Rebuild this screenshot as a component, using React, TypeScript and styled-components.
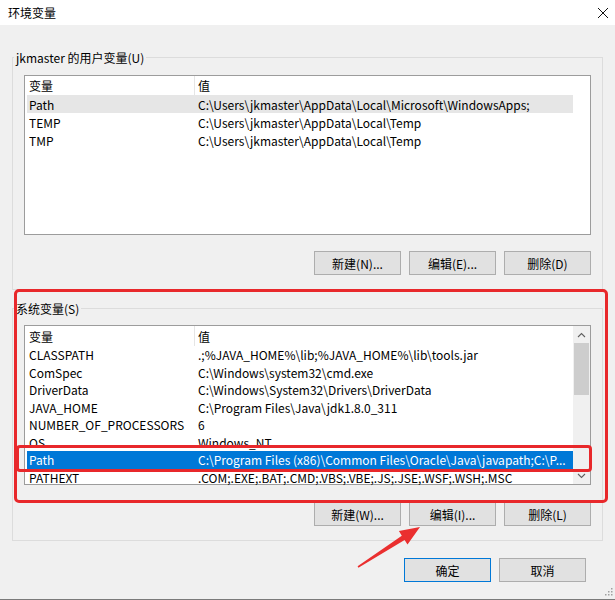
import React from "react";
import styled, { createGlobalStyle } from "styled-components";

interface EnvVar {
  name: string;
  value: string;
}

const userVars: EnvVar[] = [
  { name: "Path", value: "C:\\Users\\jkmaster\\AppData\\Local\\Microsoft\\WindowsApps;" },
  { name: "TEMP", value: "C:\\Users\\jkmaster\\AppData\\Local\\Temp" },
  { name: "TMP", value: "C:\\Users\\jkmaster\\AppData\\Local\\Temp" },
];

const systemVars: EnvVar[] = [
  { name: "CLASSPATH", value: ".;%JAVA_HOME%\\lib;%JAVA_HOME%\\lib\\tools.jar" },
  { name: "ComSpec", value: "C:\\Windows\\system32\\cmd.exe" },
  { name: "DriverData", value: "C:\\Windows\\System32\\Drivers\\DriverData" },
  { name: "JAVA_HOME", value: "C:\\Program Files\\Java\\jdk1.8.0_311" },
  { name: "NUMBER_OF_PROCESSORS", value: "6" },
  { name: "OS", value: "Windows_NT" },
  { name: "Path", value: "C:\\Program Files (x86)\\Common Files\\Oracle\\Java\\javapath;C:\\P..." },
  { name: "PATHEXT", value: ".COM;.EXE;.BAT;.CMD;.VBS;.VBE;.JS;.JSE;.WSF;.WSH;.MSC" },
];

const GlobalStyle = createGlobalStyle`
  body {
    margin: 0;
    background: #f0f0f0;
    font-family: "Noto Sans CJK SC", "Liberation Sans", sans-serif;
    font-size: 12px;
    color: #000;
  }
`;

const Window = styled.div`
  position: relative;
  width: 615px;
  height: 600px;
  background: #f0f0f0;
  box-sizing: border-box;
  border-bottom: 1px solid #7a7a7a;
  overflow: hidden;
`;

const TitleBar = styled.div`
  height: 25px;
  background: #fff;
  display: flex;
  align-items: center;
  justify-content: space-between;
  padding: 0 6px 0 8px;
  font-size: 12px;
`;

const Group = styled.fieldset<{ $top: number }>`
  position: relative;
  margin: ${(p) => p.$top}px 12px 0;
  padding: 0 0 14px;
  border: 1px solid #dcdcdc;
  min-width: 0;
`;

const Legend = styled.legend`
  margin-left: 1px;
  padding: 0 2px;
  line-height: 17px;
  font-size: 12px;
`;

const GroupInner = styled.div<{ $gap: number }>`
  padding: ${(p) => p.$gap}px 11px 0;
`;

const ListBox = styled.div<{ $height: number }>`
  position: relative;
  display: flex;
  height: ${(p) => p.$height}px;
  border: 1px solid #9c9c9c;
  background: #fff;
  box-sizing: border-box;
`;

const ListContent = styled.div`
  width: 548px;
`;

const HeaderRow = styled.div<{ $h: number }>`
  display: grid;
  grid-template-columns: 170px 1fr;
  height: ${(p) => p.$h}px;
  align-items: center;
`;

const HeaderCell = styled.div<{ $first?: boolean }>`
  height: 100%;
  display: flex;
  align-items: center;
  padding-left: ${(p) => (p.$first ? 4 : 3)}px;
  border-right: ${(p) => (p.$first ? "1px solid #e5e5e5" : "none")};
`;

const Row = styled.div<{ $h: number; $state?: "focus" | "blur" }>`
  position: relative;
  display: grid;
  grid-template-columns: 168px 1fr;
  margin-left: 2px;
  height: ${(p) => p.$h}px;
  align-items: center;
  white-space: nowrap;
  background: ${(p) =>
    p.$state === "focus" ? "#0078d7" : p.$state === "blur" ? "#e6e6e6" : "transparent"};
  color: ${(p) => (p.$state === "focus" ? "#fff" : "#000")};
`;

const Cell = styled.div<{ $pad: number }>`
  padding-left: ${(p) => p.$pad}px;
  overflow: hidden;
`;

const Scrollbar = styled.div`
  margin-left: auto;
  width: 17px;
  background: #f0f0f0;
  display: flex;
  flex-direction: column;
`;

const ScrollArrow = styled.div`
  height: 17px;
  display: flex;
  align-items: center;
  justify-content: center;
`;

const ScrollThumb = styled.div`
  height: 52px;
  margin: 0 1px;
  background: #cdcdcd;
`;

const ScrollTrack = styled.div`
  flex: 1;
`;

const ButtonRow = styled.div<{ $top: number; $right?: number }>`
  display: flex;
  justify-content: flex-end;
  gap: 8px;
  margin-top: ${(p) => p.$top}px;
  padding-right: ${(p) => p.$right ?? 0}px;
`;

const Button = styled.button<{ $default?: boolean }>`
  width: 87px;
  height: 24px;
  padding: 0;
  background: #e1e1e1;
  border: 1px solid ${(p) => (p.$default ? "#0078d7" : "#adadad")};
  font-family: inherit;
  font-size: 12px;
  color: #000;
`;

const Annotation = styled.div`
  position: absolute;
  border: 3px solid #e8282b;
  border-radius: 5px;
  pointer-events: none;
`;

const OuterMark = styled(Annotation)`
  left: 1px;
  right: -6px;
  top: -28px;
  bottom: 37px;
`;

const RowMark = styled(Annotation)`
  left: -11px;
  right: -19px;
  top: -6px;
  bottom: -3px;
  border-radius: 4px;
`;

const Overlay = styled.svg`
  position: absolute;
  left: 0;
  top: 0;
  pointer-events: none;
`;

const Grip = styled.svg`
  position: absolute;
  right: 2px;
  bottom: 3px;
`;

const Chevron = ({ up }: { up?: boolean }) => (
  <svg width="9" height="6" viewBox="0 0 9 6">
    <path
      d={up ? "M1 5 L4.5 1.5 L8 5" : "M1 1 L4.5 4.5 L8 1"}
      fill="none"
      stroke="#606060"
      strokeWidth="1.1"
    />
  </svg>
);

interface VarListProps {
  vars: EnvVar[];
  headerHeight: number;
  rowHeight: number;
  selected: number;
  focused?: boolean;
  scroll?: boolean;
}

const VarList = ({ vars, headerHeight, rowHeight, selected, focused, scroll }: VarListProps) => (
  <ListBox $height={160}>
    <ListContent>
      <HeaderRow $h={headerHeight}>
        <HeaderCell $first>变量</HeaderCell>
        <HeaderCell>值</HeaderCell>
      </HeaderRow>
      {vars.map((v, i) => (
        <Row
          key={v.name}
          $h={rowHeight}
          $state={i === selected ? (focused ? "focus" : "blur") : undefined}
        >
          <Cell $pad={2}>{v.name}</Cell>
          <Cell $pad={3}>{v.value}</Cell>
          {i === selected && focused && <RowMark />}
        </Row>
      ))}
    </ListContent>
    {scroll && (
      <Scrollbar>
        <ScrollArrow>
          <Chevron up />
        </ScrollArrow>
        <ScrollThumb />
        <ScrollTrack />
        <ScrollArrow>
          <Chevron />
        </ScrollArrow>
      </Scrollbar>
    )}
  </ListBox>
);

export default function App() {
  return (
    <>
      <GlobalStyle />
      <Window>
        <TitleBar>
          <span>环境变量</span>
          <svg width="12" height="12" viewBox="0 0 12 12">
            <path d="M1 1 L11 11 M11 1 L1 11" stroke="#111" strokeWidth="1" />
          </svg>
        </TitleBar>

        <Group $top={24}>
          <Legend>jkmaster 的用户变量(U)</Legend>
          <GroupInner $gap={9}>
            <VarList vars={userVars} headerHeight={19} rowHeight={18} selected={0} />
            <ButtonRow $top={16}>
              <Button>新建(N)...</Button>
              <Button>编辑(E)...</Button>
              <Button>删除(D)</Button>
            </ButtonRow>
          </GroupInner>
        </Group>

        <Group $top={10}>
          <Legend>系统变量(S)</Legend>
          <GroupInner $gap={8}>
            <VarList
              vars={systemVars}
              headerHeight={20}
              rowHeight={17.5}
              selected={6}
              focused
              scroll
            />
            <ButtonRow $top={17}>
              <Button>新建(W)...</Button>
              <Button>编辑(I)...</Button>
              <Button>删除(L)</Button>
            </ButtonRow>
          </GroupInner>
          <OuterMark />
        </Group>

        <ButtonRow $top={17} $right={29}>
          <Button $default>确定</Button>
          <Button>取消</Button>
        </ButtonRow>

        <Overlay width="615" height="600" viewBox="0 0 615 600">
          <polygon
            points="357.6,566.3 401.8,535.7 398.9,531.1 420,527 407.5,544.5 404.6,539.9 358.4,567.7"
            fill="#ea2f2f"
          />
        </Overlay>

        <Grip width="10" height="10" viewBox="0 0 10 10">
          {[
            [8, 2],
            [5, 5],
            [8, 5],
            [2, 8],
            [5, 8],
            [8, 8],
          ].map(([x, y]) => (
            <rect key={`${x}-${y}`} x={x} y={y} width="1.5" height="1.5" fill="#a0a0a0" />
          ))}
        </Grip>
      </Window>
    </>
  );
}
